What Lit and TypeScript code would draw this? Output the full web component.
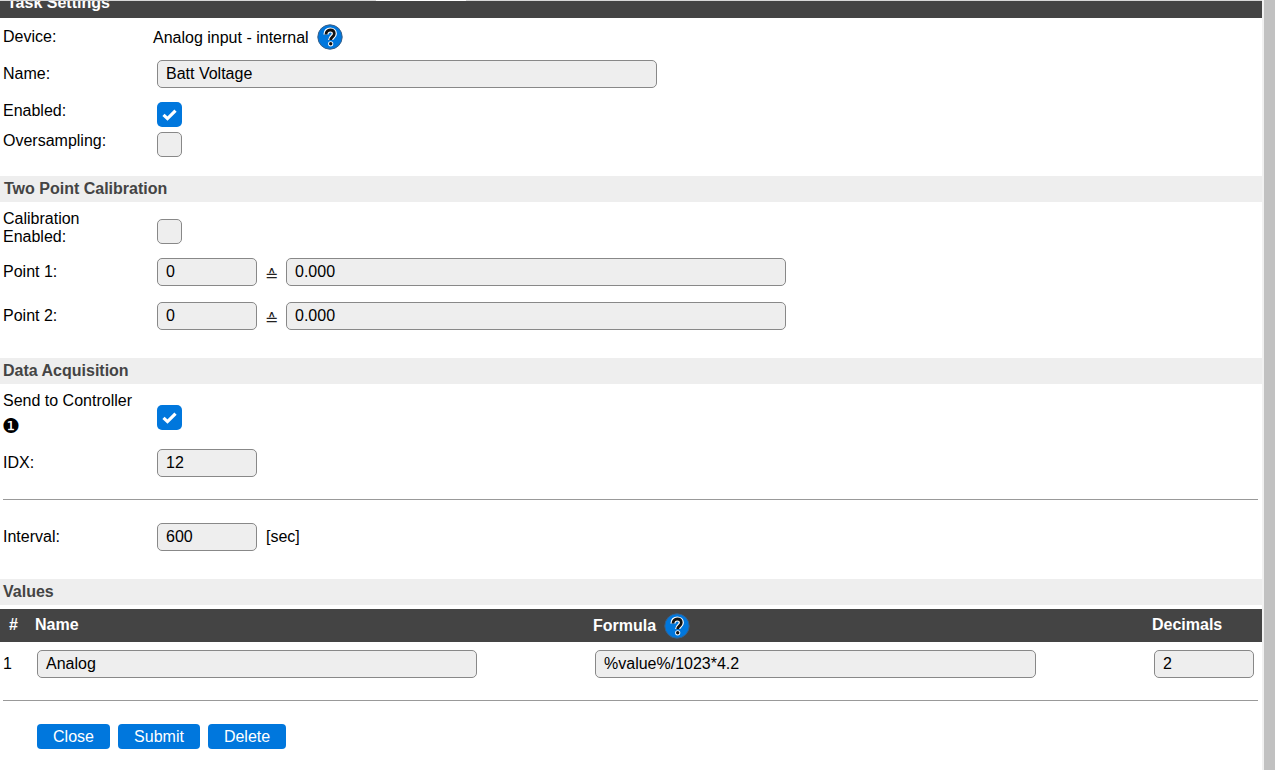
import { LitElement, html, css } from "lit";
import { customElement } from "lit/decorators.js";

const Q = "M9 10.4c0-2.7 1.8-4.4 4.2-4.4s4.1 1.5 4.1 3.8c0 3-3.6 3.1-3.6 6.1";
const help = html`<svg class="help" viewBox="0 0 26 26" width="26" height="26">
  <circle cx="13" cy="13" r="12.2" fill="#0077dd" stroke="#3a5f86" stroke-width="1"/>
  <path d="${Q}" fill="none" stroke="#fff" stroke-width="5.2"/>
  <circle cx="13.7" cy="19.8" r="2.6" fill="#fff"/>
  <path d="${Q}" fill="none" stroke="#111" stroke-width="2.8"/>
  <circle cx="13.7" cy="19.8" r="1.7" fill="#111"/>
</svg>`;

const check = (on: boolean) => html`<span class="cb ${on ? "on" : ""}">${on
  ? html`<svg viewBox="0 0 25 25" width="25" height="25"><path d="M6.5 12.8l4 3.8 8-8" fill="none" stroke="#fff" stroke-width="3.2"/></svg>`
  : ""}</span>`;

@customElement("app-root")
export class AppRoot extends LitElement {
  static styles = css`
    :host { display: block; height: 770px; overflow: hidden; background: #fff; color: #000;
      font-family: "Liberation Sans", Arial, sans-serif; font-size: 16px; line-height: 18px; }
    .shell { display: flex; height: 770px; }
    .page { width: 1262px; flex: none; display: flex; flex-direction: column; }
    .track { flex: 1; background: #f1f1f1; display: flex; justify-content: flex-end; }
    .thumb { width: 11px; height: 770px; background: #c1c1c1; }
    .tabline { height: 1px; display: flex; flex: none; }
    .tabline i { background: #d8d8d8; }
    .tabline .a { width: 376px; }
    .tabline .b { width: 90px; background: #fff; }
    .tabline .c { flex: 1; }
    .title { height: 17px; flex: none; background: #444; color: #fff; font-weight: 700; overflow: hidden; padding-left: 7px; line-height: 18px; }
    .title span { display: block; margin-top: -7px; }
    .row { display: flex; align-items: flex-start; padding-left: 3px; }
    .lbl { width: 150px; flex: none; }
    .ctl { display: flex; align-items: center; margin-left: 4px; }
    .inp { height: 28px; box-sizing: border-box; border: 1px solid #888; border-radius: 5px; background: #eee;
      padding-left: 8px; line-height: 26px; flex: none; color: #000; }
    .w100 { width: 100px; } .w500 { width: 500px; }
    .w440 { width: 440px; } .w441 { width: 441px; }
    .eq { width: 29px; text-align: center; flex: none; padding-top: 7px; font-weight: 400; color: #222; }
    .cb { display: block; width: 25px; height: 25px; box-sizing: border-box; border: 1px solid #888; border-radius: 5px; background: #eee; overflow: hidden; }
    .cb.on { background: #0077dd; border: none; }
    .cb svg { display: block; }
    .help { display: block; flex: none; }
    .device { height: 38px; flex: none; padding-top: 8px; box-sizing: border-box; }
    .device .lbl { padding-top: 2px; width: 147px; box-sizing: border-box; }
    .device .val { margin-left: 3px; display: flex; align-items: center; margin-top: -2px; }
    .device .val span { margin-right: 8px; margin-top: 2px; }
    .name { margin-top: 4px; height: 42px; flex: none; }
    .name .lbl, .p .lbl, .idx .lbl, .int .lbl { padding-top: 5px; }
    .en { height: 30px; flex: none; }
    .sec { height: 26px; flex: none; background: #eee; color: #444; font-weight: 700; padding-left: 3px; line-height: 25px; }
    .sec.first { padding-left: 4px; }
    .cal { margin-top: 7px; height: 49px; flex: none; }
    .cal .lbl { margin-top: 1px; }
    .cal .ctl { padding-top: 10px; }
    .p { height: 44px; flex: none; }
    .acq { margin-top: 7px; height: 58px; flex: none; }
    .acq .lbl { margin-top: 1px; }
    .acq .ctl { padding-top: 14px; }
    .acq .one { display: block; font-family: "DejaVu Sans", sans-serif; font-size: 20px; line-height: 32px; height: 22px; margin-left: -1px; color: #000; }
    .idx { height: 37px; flex: none; }
    hr { height: 1px; border: none; background: #999; margin: 0 0 0 3px; flex: none; width: 1255px; }
    .int { margin-top: 23px; height: 56px; flex: none; }
    .int .unit { margin-left: 9px; }
    .thead { margin-top: 4px; height: 33px; flex: none; background: #444; color: #fff; font-weight: 700; display: flex; align-items: flex-start; }
    .thead .h1 { width: 35px; padding: 7px 0 0 9px; box-sizing: border-box; flex: none; }
    .thead .h2 { width: 558px; padding-top: 7px; box-sizing: border-box; flex: none; }
    .thead .h3 { width: 559px; display: flex; align-items: center; gap: 8px; padding-top: 4px; box-sizing: border-box; flex: none; }
    .thead .h4 { padding-top: 7px; }
    .trow { margin-top: 8px; height: 50px; flex: none; display: flex; align-items: flex-start; }
    .trow .n { width: 37px; flex: none; padding: 5px 0 0 3px; box-sizing: border-box; }
    .trow .gap1 { width: 118px; flex: none; }
    .trow .gap2 { width: 118px; flex: none; }
    .btns { display: flex; gap: 8px; padding: 23px 0 0 37px; }
    .btn { height: 25px; border-radius: 4px; background: #0077dd; color: #fff; text-align: center; line-height: 25px; box-sizing: border-box; }
    .b1 { width: 73px; } .b2 { width: 82px; } .b3 { width: 78px; }
    .sp1 { height: 14px; flex: none; } .sp2 { height: 12px; flex: none; } .sp3 { height: 13px; flex: none; }
  `;

  render() {
    return html`<div class="shell">
      <div class="page">
        <div class="tabline"><i class="a"></i><i class="b"></i><i class="c"></i></div>
        <div class="title"><span>Task Settings</span></div>
        <div class="row device"><div class="lbl">Device:</div><div class="val"><span>Analog input - internal</span>${help}</div></div>
        <div class="row name"><div class="lbl">Name:</div><div class="ctl"><div class="inp w500">Batt Voltage</div></div></div>
        <div class="row en"><div class="lbl">Enabled:</div><div class="ctl">${check(true)}</div></div>
        <div class="row en"><div class="lbl">Oversampling:</div><div class="ctl">${check(false)}</div></div>
        <div class="sp1"></div>
        <div class="sec first">Two Point Calibration</div>
        <div class="row cal"><div class="lbl">Calibration<br />Enabled:</div><div class="ctl">${check(false)}</div></div>
        <div class="row p"><div class="lbl">Point 1:</div><div class="ctl"><div class="inp w100">0</div><div class="eq">≙</div><div class="inp w500">0.000</div></div></div>
        <div class="row p"><div class="lbl">Point 2:</div><div class="ctl"><div class="inp w100">0</div><div class="eq">≙</div><div class="inp w500">0.000</div></div></div>
        <div class="sp2"></div>
        <div class="sec">Data Acquisition</div>
        <div class="row acq"><div class="lbl">Send to Controller<span class="one">❶</span></div><div class="ctl">${check(true)}</div></div>
        <div class="row idx"><div class="lbl">IDX:</div><div class="ctl"><div class="inp w100">12</div></div></div>
        <div class="sp3"></div>
        <hr />
        <div class="row int"><div class="lbl">Interval:</div><div class="ctl"><div class="inp w100">600</div><span class="unit">[sec]</span></div></div>
        <div class="sec">Values</div>
        <div class="thead"><div class="h1">#</div><div class="h2">Name</div><div class="h3">Formula ${help}</div><div class="h4">Decimals</div></div>
        <div class="trow"><div class="n">1</div><div class="inp w440">Analog</div><div class="gap1"></div><div class="inp w441">%value%/1023*4.2</div><div class="gap2"></div><div class="inp w100">2</div></div>
        <hr />
        <div class="btns"><div class="btn b1">Close</div><div class="btn b2">Submit</div><div class="btn b3">Delete</div></div>
      </div>
      <div class="track"><div class="thumb"></div></div>
    </div>`;
  }
}
